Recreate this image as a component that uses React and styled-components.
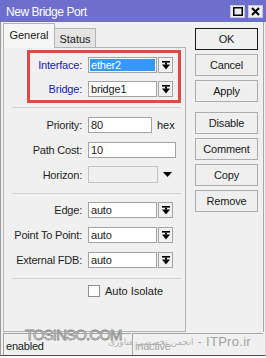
import React from "react";
import styled, { createGlobalStyle, css } from "styled-components";

const Global = createGlobalStyle`
  html, body { margin: 0; padding: 0; background: #ffffff; }
  body { font-family: "Liberation Sans", Arial, sans-serif; font-size: 11px; color: #1a1a1a; }
  * { box-sizing: border-box; }
`;

const Window = styled.div`
  width: 266px;
  height: 356px;
  display: flex;
  flex-direction: column;
  background: #f0f0f0;
`;

const TitleBar = styled.div`
  height: 22px;
  flex: none;
  display: flex;
  align-items: center;
  padding: 0 3px 0 6px;
  background: #6e6ecd;
  color: #ffffff;
  font-size: 12px;
  letter-spacing: -0.45px;
`;

const TitleText = styled.div`
  flex: 1;
  padding-top: 1px;
`;

const TitleButtons = styled.div`
  display: flex;
  gap: 3px;
`;

const TitleBtn = styled.div`
  width: 15px;
  height: 13px;
  background: #ececec;
  border: 1px solid #c8c8d8;
  display: flex;
  align-items: center;
  justify-content: center;
`;

const Frame = styled.div`
  flex: 1;
  display: flex;
  flex-direction: column;
  border-left: 1px solid #9a9a9a;
  border-right: 1px solid #d6d6d6;
  border-bottom: 1px solid #4a4a4a;
`;

const Body = styled.div`
  height: 310px;
  flex: none;
  display: flex;
  padding-top: 1px;
  border-right: 1px solid #a8a8a8;
  margin-right: 1px;
`;

const LeftCol = styled.div`
  margin-left: 2px;
  width: 183px;
  display: flex;
  flex-direction: column;
`;

const TabRow = styled.div`
  height: 24px;
  display: flex;
  align-items: flex-end;
`;

const Tab = styled.div`
  display: flex;
  align-items: center;
  justify-content: center;
  border: 1px solid #b4b4b4;
  border-bottom: none;
  ${(p) =>
    p.$active
      ? css`
          height: 25px;
          width: 52px;
          background: #f6f6f6;
          margin-bottom: -1px;
          position: relative;
          z-index: 1;
          padding-bottom: 2px;
        `
      : css`
          height: 19px;
          width: 41px;
          background: #e4e4e4;
          border-left: none;
          padding-top: 1px;
        `}
`;

const Panel = styled.div`
  flex: 1;
  border: 1px solid #b4b4b4;
  background: #f0f0f0;
  display: flex;
  flex-direction: column;
`;

const RedBox = styled.div`
  margin: 2px 4px 0 23px;
  border: 3px solid #e04a44;
  padding: 4px 0 3px;
  display: flex;
  flex-direction: column;
  gap: 8px;
`;

const Row = styled.div`
  display: flex;
  align-items: center;
  height: ${(p) => p.$h || 16}px;
  margin-top: ${(p) => p.$mt || 0}px;
`;

const Label = styled.div`
  width: ${(p) => p.$w}px;
  text-align: right;
  color: ${(p) => (p.$blue ? "#1818c4" : "#1f1f1f")};
  margin-right: 6px;
  letter-spacing: -0.2px;
  white-space: nowrap;
`;

const Input = styled.div`
  width: ${(p) => p.$w}px;
  height: ${(p) => p.$h || 16}px;
  border: 1px solid ${(p) => (p.$disabled ? "#c4c4c4" : "#a3a3a3")};
  background: ${(p) => (p.$disabled ? "#f0f0f0" : "#ffffff")};
  display: flex;
  align-items: center;
  padding: 1px;
`;

const InputText = styled.span`
  padding: 0 1px;
  height: 100%;
  display: flex;
  align-items: center;
  flex: ${(p) => (p.$selected ? 1 : "none")};
  background: ${(p) => (p.$selected ? "#3399ff" : "transparent")};
  color: ${(p) => (p.$selected ? "#ffffff" : "#1a1a1a")};
  letter-spacing: -0.2px;
`;

const DropBtn = styled.div`
  width: 15px;
  height: 16px;
  margin-left: 1px;
  border: 1px solid #a3a3a3;
  background: #f2f2f2;
  display: flex;
  align-items: center;
  justify-content: center;
`;

const Suffix = styled.span`
  margin-left: 5px;
`;

const PlainArrow = styled.div`
  margin-left: 5px;
  display: flex;
  align-items: center;
`;

const Separator = styled.div`
  margin: ${(p) => p.$mt}px 4px 0 8px;
  height: 1px;
  background: #d2d2d2;
`;

const CheckRow = styled.div`
  display: flex;
  align-items: center;
  margin: 6px 0 0 84px;
  gap: 5px;
`;

const CheckBox = styled.div`
  width: 12px;
  height: 12px;
  border: 1px solid #8e8f8f;
  background: #ffffff;
`;

const ButtonCol = styled.div`
  margin-left: 9px;
  padding-top: 5px;
  display: flex;
  flex-direction: column;
  width: 63px;
`;

const Button = styled.div`
  height: 22px;
  margin-top: ${(p) => p.$mt || 0}px;
  border: 1px solid ${(p) => (p.$default ? "#1a1a1a" : "#adadad")};
  background: #efefef;
  display: flex;
  align-items: center;
  justify-content: center;
  letter-spacing: -0.2px;
  color: #1a1a1a;
`;

const StatusBar = styled.div`
  position: relative;
  margin: 1px 2px 0 2px;
  height: 22px;
  display: flex;
  gap: 1px;
`;

const StatusCell = styled.div`
  width: ${(p) => p.$w}px;
  border-top: 1px solid #a6a6a6;
  border-left: 1px solid #a6a6a6;
  padding: 6px 0 0 2px;
  color: ${(p) => (p.$muted ? "#a4a4a4" : "#1a1a1a")};
  letter-spacing: -0.2px;
`;

const Watermark = styled.div`
  position: absolute;
  left: 0;
  top: 0;
  width: 100%;
  height: 100%;
  pointer-events: none;
`;

const WmLogo = styled.div`
  position: absolute;
  left: 22px;
  top: -7px;
  font-size: 15px;
  color: #ffffff;
  -webkit-text-stroke: 0.8px #8a8a8a;
  letter-spacing: -0.9px;
`;

const WmSite = styled.div`
  position: absolute;
  right: 12px;
  top: 1px;
  display: flex;
  align-items: center;
  gap: 4px;
  color: #a2a2a2;
`;

const WmFa = styled.span`
  font-family: "DejaVu Sans", "Noto Sans", sans-serif;
  font-size: 9px;
  direction: rtl;
  color: #b0b0b0;
`;

const WmLatin = styled.span`
  font-size: 13px;
  letter-spacing: 0.3px;
`;

const DropGlyph = () => (
  <svg width="8" height="9" viewBox="0 0 8 9">
    <rect x="0" y="0" width="8" height="1.6" fill="#000" />
    <rect x="3" y="1.6" width="2" height="2" fill="#000" />
    <polygon points="0,3.6 8,3.6 4,8.4" fill="#000" />
  </svg>
);

const Select = ({ value, selected, w = 69 }) => (
  <>
    <Input $w={w}>
      <InputText $selected={selected}>{value}</InputText>
    </Input>
    <DropBtn>
      <DropGlyph />
    </DropBtn>
  </>
);

export default function App() {
  return (
    <>
      <Global />
      <Window>
        <TitleBar>
          <TitleText>New Bridge Port</TitleText>
          <TitleButtons>
            <TitleBtn>
              <svg width="10" height="9" viewBox="0 0 10 9">
                <rect x="0.75" y="0.75" width="8.5" height="7.5" fill="none" stroke="#000" strokeWidth="1.5" />
              </svg>
            </TitleBtn>
            <TitleBtn>
              <svg width="9" height="9" viewBox="0 0 9 9">
                <path d="M1 1 L8 8 M8 1 L1 8" stroke="#000" strokeWidth="2" />
              </svg>
            </TitleBtn>
          </TitleButtons>
        </TitleBar>
        <Frame>
          <Body>
            <LeftCol>
              <TabRow>
                <Tab $active>General</Tab>
                <Tab>Status</Tab>
              </TabRow>
              <Panel>
                <RedBox>
                  <Row>
                    <Label $w={52} $blue>Interface:</Label>
                    <Select value="ether2" selected />
                  </Row>
                  <Row>
                    <Label $w={52} $blue>Bridge:</Label>
                    <Select value="bridge1" />
                  </Row>
                </RedBox>
                <Separator $mt={4} />
                <Row $mt={9}>
                  <Label $w={78}>Priority:</Label>
                  <Input $w={64}>
                    <InputText>80</InputText>
                  </Input>
                  <Suffix>hex</Suffix>
                </Row>
                <Row $mt={9}>
                  <Label $w={78}>Path Cost:</Label>
                  <Input $w={88}>
                    <InputText>10</InputText>
                  </Input>
                </Row>
                <Row $mt={8} $h={17}>
                  <Label $w={78}>Horizon:</Label>
                  <Input $w={70} $h={17} $disabled />
                  <PlainArrow>
                    <svg width="9" height="5" viewBox="0 0 9 5">
                      <polygon points="0,0 9,0 4.5,5" fill="#000" />
                    </svg>
                  </PlainArrow>
                </Row>
                <Separator $mt={10} />
                <Row $mt={8}>
                  <Label $w={78}>Edge:</Label>
                  <Select value="auto" />
                </Row>
                <Row $mt={9}>
                  <Label $w={78}>Point To Point:</Label>
                  <Select value="auto" />
                </Row>
                <Row $mt={9}>
                  <Label $w={78}>External FDB:</Label>
                  <Select value="auto" />
                </Row>
                <Separator $mt={10} />
                <CheckRow>
                  <CheckBox />
                  <span>Auto Isolate</span>
                </CheckRow>
              </Panel>
            </LeftCol>
            <ButtonCol>
              <Button $default>OK</Button>
              <Button $mt={4}>Cancel</Button>
              <Button $mt={4}>Apply</Button>
              <Button $mt={10}>Disable</Button>
              <Button $mt={4}>Comment</Button>
              <Button $mt={4}>Copy</Button>
              <Button $mt={4}>Remove</Button>
            </ButtonCol>
          </Body>
          <StatusBar>
            <StatusCell $w={128}>enabled</StatusCell>
            <StatusCell $w={131} $muted>inactive</StatusCell>
            <Watermark>
              <WmLogo>TOSINSO.COM</WmLogo>
              <WmSite>
                <WmFa>انجمن تخصصی فناوری</WmFa>
                <WmLatin>- ITPro.ir</WmLatin>
              </WmSite>
            </Watermark>
          </StatusBar>
        </Frame>
      </Window>
    </>
  );
}
